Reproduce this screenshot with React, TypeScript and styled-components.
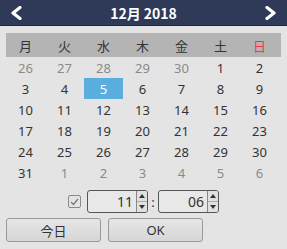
import styled, { createGlobalStyle } from "styled-components";

const GlobalStyle = createGlobalStyle`
  html, body {
    margin: 0;
    padding: 0;
    background: #e4e4e4;
  }
  body {
    font-family: "Noto Sans", "Noto Sans CJK JP", sans-serif;
  }
`;

const Picker = styled.div`
  width: 287px;
  height: 249px;
  background: #e4e4e4;
  display: flex;
  flex-direction: column;
`;

const Header = styled.div`
  height: 26px;
  background: #2f3a59;
  border-bottom: 1px solid #1f2740;
  box-sizing: border-box;
  display: flex;
  align-items: center;
  justify-content: space-between;
  padding: 0 10px;
  color: #fff;
`;

const Title = styled.div`
  font-family: "Noto Sans CJK JP", "Noto Sans", sans-serif;
  font-weight: 700;
  font-size: 14px;
  line-height: 1;
`;

const NavButton = styled.div`
  width: 12px;
  height: 14px;
  display: flex;
`;

const WeekBar = styled.div`
  margin: 7px 6px 0;
  height: 24px;
  background: #b4b4b4;
  display: grid;
  grid-template-columns: repeat(7, 39px);
  align-items: center;
`;

const WeekDay = styled.div<{ $sunday?: boolean }>`
  text-align: center;
  font-family: "Noto Sans CJK JP", sans-serif;
  font-size: 13px;
  color: ${(p) => (p.$sunday ? "#f03c3c" : "#333")};
`;

const Days = styled.div`
  margin: 0 6px;
  display: grid;
  grid-template-columns: repeat(7, 39px);
  grid-auto-rows: 21px;
`;

const Day = styled.div<{ $muted?: boolean; $selected?: boolean }>`
  display: flex;
  align-items: center;
  justify-content: center;
  font-size: 13px;
  color: ${(p) => (p.$selected ? "#fff" : p.$muted ? "#8a8a8a" : "#333")};
  background: ${(p) => (p.$selected ? "#5aaedd" : "transparent")};
`;

const TimeRow = styled.div`
  margin-top: 7px;
  display: flex;
  align-items: center;
  justify-content: center;
  height: 23px;
`;

const Check = styled.div`
  width: 13px;
  height: 13px;
  box-sizing: border-box;
  border: 1px solid #8a8a8a;
  border-radius: 2px;
  display: flex;
  align-items: center;
  justify-content: center;
  margin-right: 6px;
`;

const Spin = styled.div`
  width: 61px;
  height: 23px;
  box-sizing: border-box;
  border: 1px solid #555;
  border-radius: 3px;
  display: flex;
  background: #e8e8e8;
`;

const SpinValue = styled.div`
  flex: 1;
  text-align: right;
  padding-right: 3px;
  font-size: 14px;
  line-height: 21px;
  color: #333;
`;

const SpinArrows = styled.div`
  width: 10px;
  border-left: 1px solid #888;
  display: flex;
  flex-direction: column;
  background: #e0e0e0;
  border-radius: 0 2px 2px 0;
`;

const SpinArrow = styled.div<{ $down?: boolean }>`
  flex: 1;
  display: flex;
  align-items: center;
  justify-content: center;
  border-top: ${(p) => (p.$down ? "1px solid #aaa" : "none")};
  &::after {
    content: "";
    border-left: 3px solid transparent;
    border-right: 3px solid transparent;
    ${(p) =>
      p.$down ? "border-top: 4px solid #333;" : "border-bottom: 4px solid #333;"}
  }
`;

const Colon = styled.div`
  width: 10px;
  text-align: center;
  font-size: 13px;
  color: #333;
`;

const Buttons = styled.div`
  margin: 5px 6px 0;
  display: flex;
  gap: 7px;
`;

const Button = styled.div`
  width: 95px;
  height: 24px;
  box-sizing: border-box;
  border: 1px solid #999;
  border-radius: 3px;
  background: linear-gradient(#e6e6e6, #d6d6d6);
  display: flex;
  align-items: center;
  justify-content: center;
  font-family: "Noto Sans", "Noto Sans CJK JP", sans-serif;
  font-size: 13px;
  color: #333;
`;

const weekDays = ["月", "火", "水", "木", "金", "土", "日"];

type Cell = { d: number; muted?: boolean };

const cells: Cell[] = [
  ...[26, 27, 28, 29, 30].map((d) => ({ d, muted: true })),
  ...Array.from({ length: 31 }, (_, i) => ({ d: i + 1 })),
  ...[1, 2, 3, 4, 5, 6].map((d) => ({ d, muted: true })),
];

function Chevron({ dir }: { dir: "left" | "right" }) {
  const pts = dir === "left" ? "10,1.5 3,7 10,12.5" : "2,1.5 9,7 2,12.5";
  return (
    <svg width="12" height="14" viewBox="0 0 12 14">
      <polyline
        points={pts}
        fill="none"
        stroke="#fff"
        strokeWidth="3.2"
        strokeLinecap="round"
        strokeLinejoin="round"
      />
    </svg>
  );
}

export default function App() {
  return (
    <>
      <GlobalStyle />
      <Picker>
        <Header>
          <NavButton>
            <Chevron dir="left" />
          </NavButton>
          <Title>12月 2018</Title>
          <NavButton>
            <Chevron dir="right" />
          </NavButton>
        </Header>
        <WeekBar>
          {weekDays.map((w) => (
            <WeekDay key={w} $sunday={w === "日"}>
              {w}
            </WeekDay>
          ))}
        </WeekBar>
        <Days>
          {cells.map((c, i) => (
            <Day key={i} $muted={c.muted} $selected={!c.muted && c.d === 5}>
              {c.d}
            </Day>
          ))}
        </Days>
        <TimeRow>
          <Check>
            <svg width="9" height="8" viewBox="0 0 9 8">
              <polyline
                points="1,4 3.5,6.5 8,1"
                fill="none"
                stroke="#6a7a8a"
                strokeWidth="1.2"
              />
            </svg>
          </Check>
          <Spin>
            <SpinValue>11</SpinValue>
            <SpinArrows>
              <SpinArrow />
              <SpinArrow $down />
            </SpinArrows>
          </Spin>
          <Colon>:</Colon>
          <Spin>
            <SpinValue>06</SpinValue>
            <SpinArrows>
              <SpinArrow />
              <SpinArrow $down />
            </SpinArrows>
          </Spin>
        </TimeRow>
        <Buttons>
          <Button>今日</Button>
          <Button>OK</Button>
        </Buttons>
      </Picker>
    </>
  );
}
